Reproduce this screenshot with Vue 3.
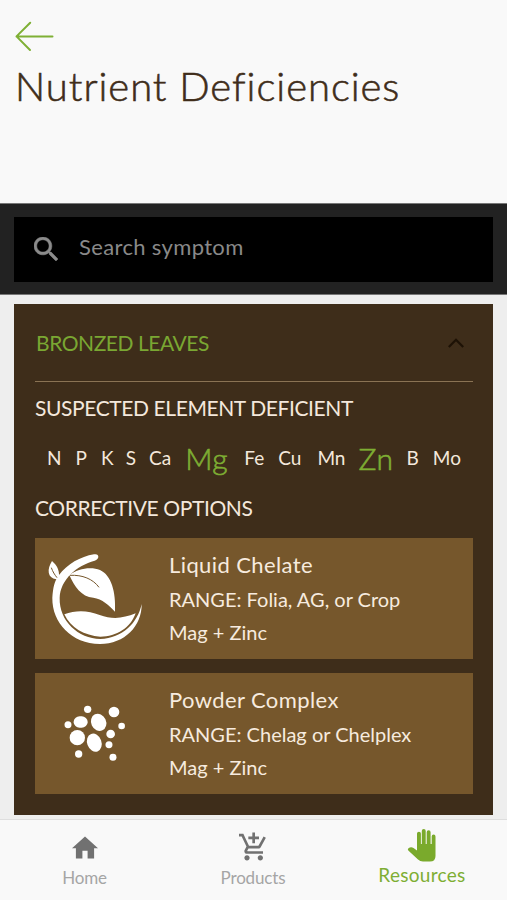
<script setup>
const elements = [
  { symbol: 'N' },
  { symbol: 'P' },
  { symbol: 'K' },
  { symbol: 'S' },
  { symbol: 'Ca' },
  { symbol: 'Mg', deficient: true },
  { symbol: 'Fe' },
  { symbol: 'Cu' },
  { symbol: 'Mn' },
  { symbol: 'Zn', deficient: true },
  { symbol: 'B' },
  { symbol: 'Mo' },
]
const options = [
  { icon: 'liquid', name: 'Liquid Chelate', range: 'RANGE: Folia, AG, or Crop', contents: 'Mag + Zinc' },
  { icon: 'powder', name: 'Powder Complex', range: 'RANGE: Chelag or Chelplex', contents: 'Mag + Zinc' },
]
</script>

<template>
  <div class="screen">
    <header class="header">
      <svg class="back" viewBox="0 0 40 32" fill="none" stroke="#7fb035" stroke-width="2" stroke-linecap="round" stroke-linejoin="round">
        <path d="M37.5 16.4H1.5M15.2 2.8L1.5 16.4L15 30" />
      </svg>
      <h1 class="title">Nutrient Deficiencies</h1>
    </header>

    <div class="search-bar">
      <div class="search">
        <svg class="search-icon" viewBox="3 3 17.5 17.5" fill="#8b8b8b" stroke="#8b8b8b" stroke-width=".4">
          <path d="M15.5 14h-.79l-.28-.27C15.41 12.59 16 11.11 16 9.5 16 5.91 13.09 3 9.5 3S3 5.91 3 9.5 5.91 16 9.5 16c1.61 0 3.09-.59 4.23-1.57l.27.28v.79l5 4.99L20.49 19l-4.99-5zm-6 0C7.01 14 5 11.99 5 9.5S7.01 5 9.5 5 14 7.01 14 9.5 11.99 14 9.5 14z" />
        </svg>
        <span class="placeholder">Search symptom</span>
      </div>
    </div>

    <main class="content">
      <section class="panel">
        <div class="panel-head">
          <span class="symptom">BRONZED LEAVES</span>
          <svg class="chevron" viewBox="0 0 18 12" fill="none" stroke="#1d1206" stroke-width="2.2">
            <path d="M1.8 10L9 2.8L16.2 10" />
          </svg>
        </div>
        <h2 class="label suspected">SUSPECTED ELEMENT DEFICIENT</h2>
        <div class="elements">
          <span v-for="e in elements" :key="e.symbol" class="element" :class="{ deficient: e.deficient }">{{ e.symbol }}</span>
        </div>
        <h2 class="label corrective">CORRECTIVE OPTIONS</h2>
        <div class="options">
          <article v-for="o in options" :key="o.name" class="option">
            <div class="picture">
              <svg v-if="o.icon === 'liquid'" class="liquid" viewBox="45 45 300 288">
                <path fill="#fff" d="M192 58C208 54 210 72 194 77C140 92 91 133 89 189C87 258 145 311 211 312C278 309 323 264 335 207C336 273 284 327 210 327C124 326 66 263 67 189C69 157 74 142 79 133C52 129 50 103 66 78C81 91 88 106 87 120C112 87 151 65 192 58Z" />
                <path fill="#fff" d="M118 120C143 100 184 94 210 105C244 121 258 170 255 230C239 212 216 191 190 188C154 186 132 153 118 120Z" />
                <path fill="none" stroke="#76572c" stroke-width="3" d="M120 121C157 119 189 132 207 157M64 98C68 110 74 119 81 128" />
                <path fill="#fff" d="M103 238C138 224 175 226 209 240C248 254 280 250 317 235C302 278 260 305 211 305C164 302 121 279 103 238Z" />
              </svg>
              <svg v-else class="powder" viewBox="100 100 190 178" fill="#fff">
                <circle cx="174" cy="119" r="11" />
                <circle cx="253" cy="127" r="16" />
                <circle cx="115" cy="165" r="10.5" />
                <circle cx="276" cy="169" r="10" />
                <circle cx="243" cy="193" r="13" />
                <circle cx="238" cy="225" r="10.5" />
                <circle cx="147" cy="253" r="11" />
                <circle cx="250" cy="263" r="10.5" />
                <rect x="132" y="140" width="42" height="34" rx="18" ry="16" />
                <ellipse cx="207" cy="158" rx="22.5" ry="26.5" transform="rotate(-25 207 158)" />
                <ellipse cx="143" cy="204" rx="23" ry="23" />
                <ellipse cx="194" cy="219" rx="21.5" ry="28" transform="rotate(-20 194 219)" />
              </svg>
            </div>
            <div class="details">
              <h3 class="name">{{ o.name }}</h3>
              <p class="line range">{{ o.range }}</p>
              <p class="line">{{ o.contents }}</p>
            </div>
          </article>
        </div>
      </section>
    </main>

    <nav class="tabs">
      <a class="tab">
        <svg class="home" viewBox="2 3 20 17" fill="#717171"><path d="M10 20v-6h4v6h5v-8h3L12 3 2 12h3v8z" /></svg>
        <span class="tab-label home-label">Home</span>
      </a>
      <a class="tab">
        <svg class="cart" viewBox="1 1 21 21" fill="#717171">
          <path d="M11 9h2V6h3V4h-3V1h-2v3H8v2h3v3zm-4 9c-1.100 0-1.990.9-1.990 2S5.900 22 7 22s2-.9 2-2-.9-2-2-2zm10 0c-1.100 0-1.990.9-1.990 2s.890 2 1.990 2 2-.9 2-2-.9-2-2-2zm-9.830-3.250l.03-.12.9-1.630h7.450c.75 0 1.410-.41 1.750-1.030l3.860-7.010L19.420 4h-.01l-1.100 2-2.760 5H8.530l-.13-.27L6.160 6l-.95-2-.94-2H1v2h2l3.600 7.590-1.350 2.450c-.16.28-.25.61-.25.96 0 1.100.9 2 2 2h12v-2H7.420c-.13 0-.25-.11-.25-.25z" />
        </svg>
        <span class="tab-label products-label">Products</span>
      </a>
      <a class="tab active">
        <svg class="hand" viewBox="0 0 31 33" fill="#7aaa2c">
          <path d="M10 4.600a1.950 1.950 0 0 1 3.900 0V15h.9V2a1.950 1.950 0 0 1 3.900 0V15h1V3.300a1.950 1.950 0 0 1 3.900 0V15h1.100V7.500a1.900 1.900 0 0 1 3.800 0V27Q28.500 32.500 23 32.500H16Q13 32.500 11 30.500L1.300 21.500Q.2 20.300 1.500 19.200Q4 17.200 6.500 19L10 21.500Z" />
        </svg>
        <span class="tab-label resources-label">Resources</span>
      </a>
    </nav>
  </div>
</template>

<style>
body {
  background: #eeeeee;
}
</style>

<style scoped>
.screen {
  display: flex;
  flex-direction: column;
  width: 507px;
  height: 900px;
  overflow: hidden;
  background: #eeeeee;
  font-family: Lato, "Open Sans", sans-serif;
  font-variant-ligatures: none;
}
h1, h2, h3, p {
  margin: 0;
  font-weight: 400;
}
.screen span, h1, h2, h3, p {
  white-space: nowrap;
}
.header {
  box-sizing: border-box;
  height: 203px;
  padding: 20px 15px 0;
  background: #f9f9f9;
}
.back {
  display: block;
  width: 40px;
  height: 32px;
}
.title {
  margin-top: 10px;
  font-size: 40px;
  font-weight: 300;
  line-height: 48px;
  letter-spacing: .95px;
  color: #402d1a;
  -webkit-text-stroke: .6px #402d1a;
}
.search-bar {
  box-sizing: border-box;
  height: 92px;
  padding: 13px 14px;
  border-top: 1px solid #777;
  border-bottom: 1px solid #777;
  background: #222222;
}
.search {
  display: flex;
  align-items: center;
  height: 65px;
  padding-left: 20px;
  background: #000;
}
.search-icon {
  width: 24px;
  height: 24px;
  margin-top: -2px;
}
.placeholder {
  margin: -5px 0 0 21px;
  font-size: 22px;
  line-height: 26px;
  letter-spacing: .35px;
  color: #898989;
}
.content {
  flex: 1;
  padding: 10px 14px 0;
}
.panel {
  box-sizing: border-box;
  height: 511px;
  margin-top: -1px;
  padding: 0 20px 0 21px;
  background: #3e2d1a;
}
.panel-head {
  box-sizing: border-box;
  display: flex;
  align-items: center;
  justify-content: space-between;
  height: 78px;
  padding: 0 8px 0 1px;
  border-bottom: 1px solid #8a7354;
}
.symptom {
  font-size: 21px;
  line-height: 26px;
  letter-spacing: -.45px;
  color: #7aa732;
}
.chevron {
  width: 18px;
  height: 12px;
}
.label {
  font-size: 21px;
  line-height: 26px;
  letter-spacing: -.4px;
  color: #f4e8dc;
}
.suspected {
  margin-top: 13px;
}
.elements {
  display: flex;
  align-items: center;
  justify-content: space-between;
  height: 34px;
  margin: 20px 12px 0;
}
.element {
  font-size: 19px;
  line-height: 34px;
  color: #f4e8dc;
}
.element:nth-child(4) {
  margin-left: -2px;
}
.element:nth-child(5) {
  margin-left: -1px;
}
.element:nth-child(7),
.element:nth-child(9) {
  margin-left: 2px;
}
.element:nth-child(10),
.element:nth-child(11) {
  margin-left: -1px;
}
.deficient {
  font-size: 30px;
  font-weight: 300;
  letter-spacing: .5px;
  color: #7eae33;
  -webkit-text-stroke: .6px #7eae33;
}
.corrective {
  margin-top: 20px;
}
.options {
  display: grid;
  gap: 14px;
  margin-top: 17px;
}
.option {
  display: flex;
  height: 121px;
  background: #76572c;
}
.picture {
  display: flex;
  width: 134px;
}
.liquid {
  width: 100px;
  height: 96px;
  margin: 12px 0 0 10px;
}
.powder {
  width: 63.300px;
  height: 59.300px;
  margin: 30px 0 0 28.300px;
}
.details {
  padding-top: 14px;
}
.name {
  font-size: 22px;
  line-height: 26px;
  letter-spacing: .4px;
  color: #f7ebdf;
}
.line {
  font-size: 20px;
  line-height: 33px;
  color: #f7ebdf;
}
.range {
  margin-top: 5px;
}
.tabs {
  box-sizing: border-box;
  display: grid;
  grid-template-columns: 169px 168px 170px;
  height: 81px;
  border-top: 1px solid #dedede;
  background: #f9f9f9;
}
.tab {
  display: flex;
  flex-direction: column;
  align-items: center;
}
.home {
  width: 26px;
  height: 23px;
  margin-top: 16px;
}
.cart {
  width: 28px;
  height: 29px;
  margin-top: 12px;
}
.hand {
  width: 31px;
  height: 33px;
  margin-top: 9px;
}
.tab-label {
  font-size: 17px;
  line-height: 20px;
  letter-spacing: -.15px;
  color: #a5a5a5;
}
.home-label {
  margin-top: 9px;
}
.products-label {
  margin-top: 7px;
}
.tab .resources-label {
  margin-top: 2px;
  font-size: 19px;
  line-height: 22px;
  letter-spacing: .3px;
  color: #7eae33;
}
</style>
